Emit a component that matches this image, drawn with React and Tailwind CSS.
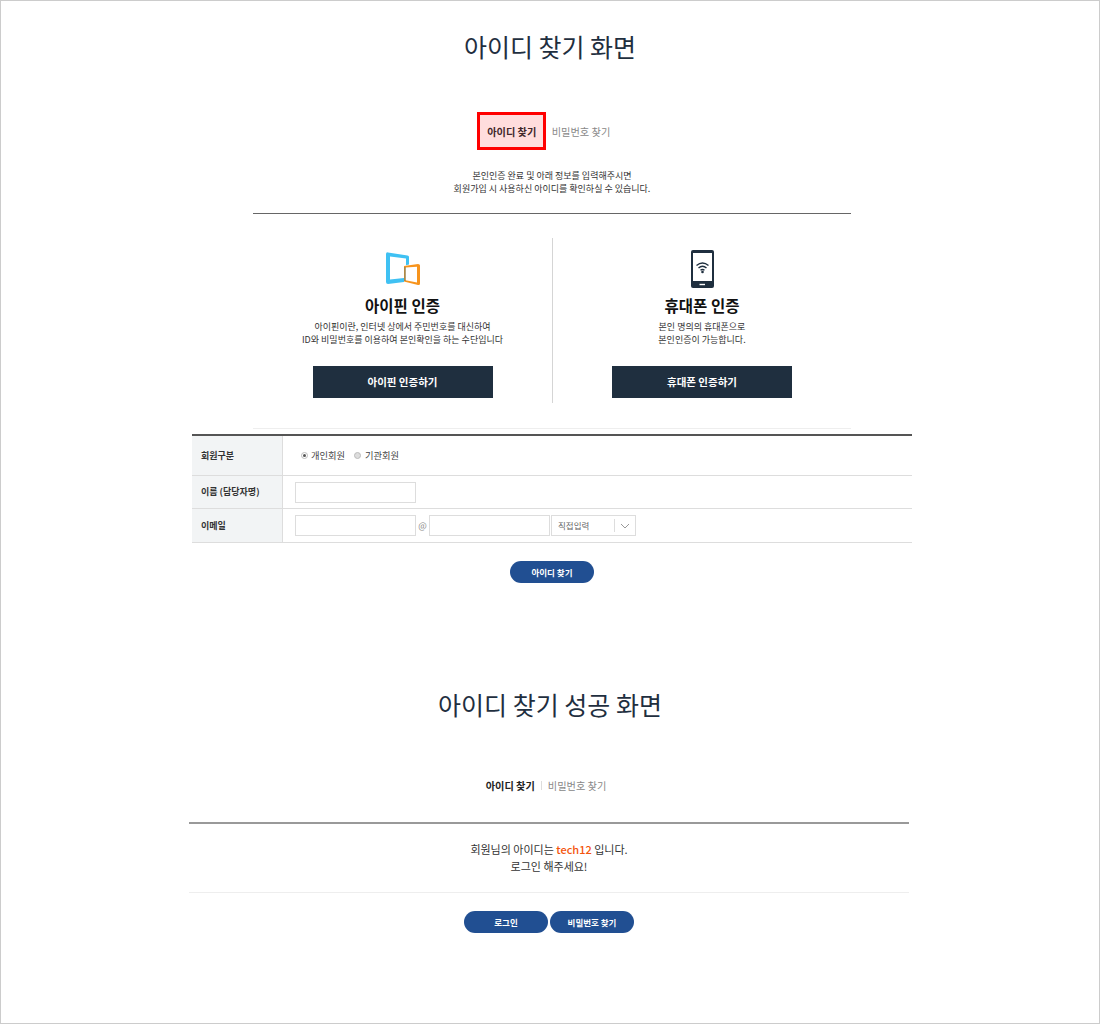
// App.jsx - 아이디 찾기 화면

const FONT = "font-['Noto_Sans_CJK_KR','Noto_Sans',sans-serif]";

function IpinIcon() {
    return (
        <svg width="36" height="34" viewBox="0 0 36 34" fill="none">
            <path
                fillRule="evenodd"
                d="M1 2 Q1 0 3 0.4 L22.5 3.5 Q24 3.7 24 5 V12.5 L21 13.2 V6.5 L5 4.5 V27.5 L19 26 V30 L3 32 Q1 32 1 30 Z"
                fill="#3fc1f3"
            />
            <path
                fillRule="evenodd"
                d="M19 14 L33 12 Q35 12 35 13.5 V31.5 Q35 33.5 33 33 L19 29.5 Z M20.5 15.5 V28.3 L32 30.4 V14.7 Z"
                fill="#f7941d"
            />
            <path d="M20 15 V29" stroke="#6f7f6a" strokeWidth="1" />
        </svg>
    );
}

function PhoneIcon() {
    return (
        <svg width="23" height="38" viewBox="0 0 23 38" fill="none">
            <rect width="23" height="38" rx="2" fill="#1f2f3f" />
            <rect x="2" y="3" width="19" height="28" fill="#ffffff" />
            <rect x="8.5" y="33.8" width="5.5" height="1.4" fill="#ffffff" />
            <path d="M5.5 15.5 Q11.5 10.5 17.5 15.5" stroke="#1f2f3f" strokeWidth="1.4" />
            <path d="M7.5 18 Q11.5 14.5 15.5 18" stroke="#1f2f3f" strokeWidth="1.4" />
            <path d="M9.5 20.3 Q11.5 18.7 13.5 20.3" stroke="#1f2f3f" strokeWidth="1.4" />
            <circle cx="11.5" cy="22" r="1.3" fill="#1f2f3f" />
        </svg>
    );
}

function AuthCard({ icon, title, lines, button, className }) {
    return (
        <div className={`h-[165px] flex flex-col items-center ${className}`}>
            <div className="h-[38px] mt-[12px] flex items-center justify-center">{icon}</div>
            <h3 className="mt-[5px] text-[15.5px] leading-[24px] font-bold text-[#111]">{title}</h3>
            <p className="text-[9px] leading-[13px] mt-[3px] text-[#333] text-center">
                {lines[0]}<br />{lines[1]}
            </p>
            <button className="mt-[20px] w-[180px] h-[32px] bg-[#1f2f3f] text-white text-[10.5px] font-bold">{button}</button>
        </div>
    );
}

function PillButton({ children }) {
    return (
        <button className="w-[84px] h-[22px] rounded-full bg-[#214f92] text-white text-[8.5px] font-bold">{children}</button>
    );
}

function FormRow({ label, className, children }) {
    return (
        <div className={`flex border-b border-[#ddd] ${className}`}>
            <div className="w-[91px] shrink-0 bg-[#f2f4f5] border-r border-[#ddd] pl-[9px] flex items-center text-[9px] font-bold text-[#333]">{label}</div>
            <div className="flex-1 pl-[12px] flex items-center">{children}</div>
        </div>
    );
}

function TextBox() {
    return <div className="w-[121px] h-[21px] border border-[#ddd] bg-white"></div>;
}

export default function App() {
    return (
        <div className={`w-[1100px] h-[1024px] border border-[#ccc] bg-white flex flex-col items-center ${FONT}`}>
            <h1 className="mt-[26px] text-[25px] leading-[38px] text-[#1f2f3f]">아이디 찾기 화면</h1>

            <div className="mt-[47px] mr-[13px] flex items-center">
                <div className="w-[69px] h-[38px] border-[3px] border-[#f00] bg-[#fdd] pl-[1px] pt-[1px] flex items-center justify-center text-[10.2px] font-bold text-[#40262a]">아이디 찾기</div>
                <span className="ml-[6px] pt-[1px] text-[10.2px] text-[#888]">비밀번호 찾기</span>
            </div>

            <p className="mt-[19px] ml-[4px] text-[9px] leading-[13px] text-[#333] text-center">
                본인인증 완료 및 아래 정보를 입력해주시면<br />
                회원가입 시 사용하신 아이디를 확인하실 수 있습니다.
            </p>

            <div className="mt-[18px] ml-[4px] w-[598px] border-t border-[#666]">
                <div className="mt-[24px] flex">
                    <AuthCard
                        className="w-[300px] border-r border-[#d5d5d5]"
                        icon={<IpinIcon />}
                        title="아이핀 인증"
                        lines={['아이핀이란, 인터넷 상에서 주민번호를 대신하여', 'ID와 비밀번호를 이용하여 본인확인을 하는 수단입니다']}
                        button="아이핀 인증하기"
                    />
                    <AuthCard
                        className="w-[298px]"
                        icon={<PhoneIcon />}
                        title="휴대폰 인증"
                        lines={['본인 명의의 휴대폰으로', '본인인증이 가능합니다.']}
                        button="휴대폰 인증하기"
                    />
                </div>
                <div className="mt-[25px] border-t border-[#eee]"></div>
            </div>

            <div className="w-[720px] ml-[4px] mt-[5px] border-t-2 border-[#555]">
                <FormRow label="회원구분" className="h-[40px]">
                    <div className="ml-[6px] flex items-center text-[9.25px] text-[#444]">
                        <span className="w-[7px] h-[7px] rounded-full border border-[#bbb] bg-white flex items-center justify-center mr-[3px]">
                            <span className="w-[3px] h-[3px] rounded-full bg-[#555]"></span>
                        </span>
                        개인회원
                        <span className="w-[7px] h-[7px] rounded-full border border-[#bbb] bg-[#ddd] ml-[9px] mr-[4px]"></span>
                        기관회원
                    </div>
                </FormRow>
                <FormRow label="이름 (담당자명)" className="h-[33px]">
                    <TextBox />
                </FormRow>
                <FormRow label="이메일" className="h-[34px]">
                    <TextBox />
                    <span className="w-[13px] text-center text-[9px] text-[#888]">@</span>
                    <TextBox />
                    <div className="ml-[1px] w-[85px] h-[21px] border border-[#ddd] flex items-center text-[8.5px] text-[#666]">
                        <span className="flex-1 pl-[6px]">직접입력</span>
                        <span className="w-[21px] h-[13px] border-l border-[#ddd] flex items-center justify-center">
                            <svg width="10" height="6" viewBox="0 0 10 6" fill="none"><path d="M1 1 L5 5 L9 1" stroke="#999" strokeWidth="1" /></svg>
                        </span>
                    </div>
                </FormRow>
            </div>

            <div className="mt-[18px] ml-[4px] flex"><PillButton>아이디 찾기</PillButton></div>

            <h1 className="mt-[102px] text-[25px] leading-[38px] text-[#1f2f3f]">아이디 찾기 성공 화면</h1>

            <div className="mt-[55px] mr-[8px] flex items-center text-[10.2px] leading-[15px]">
                <span className="font-bold text-[#222]">아이디 찾기</span>
                <span className="mx-[6px] w-px h-[9px] bg-[#ddd]"></span>
                <span className="text-[#888]">비밀번호 찾기</span>
            </div>

            <div className="mt-[29px] mr-[2px] w-[720px] h-[71px] border-t-2 border-[#999] border-b border-b-[#eee] flex flex-col items-center justify-center">
                <p className="text-[11px] leading-[17px] text-[#333] text-center">
                    회원님의 아이디는 <span className="text-[#f4540c] font-medium">tech12</span> 입니다.<br />
                    로그인 해주세요!
                </p>
            </div>

            <div className="mt-[18px] mr-[2px] flex gap-[2px]">
                <PillButton>로그인</PillButton>
                <PillButton>비밀번호 찾기</PillButton>
            </div>
        </div>
    );
}
